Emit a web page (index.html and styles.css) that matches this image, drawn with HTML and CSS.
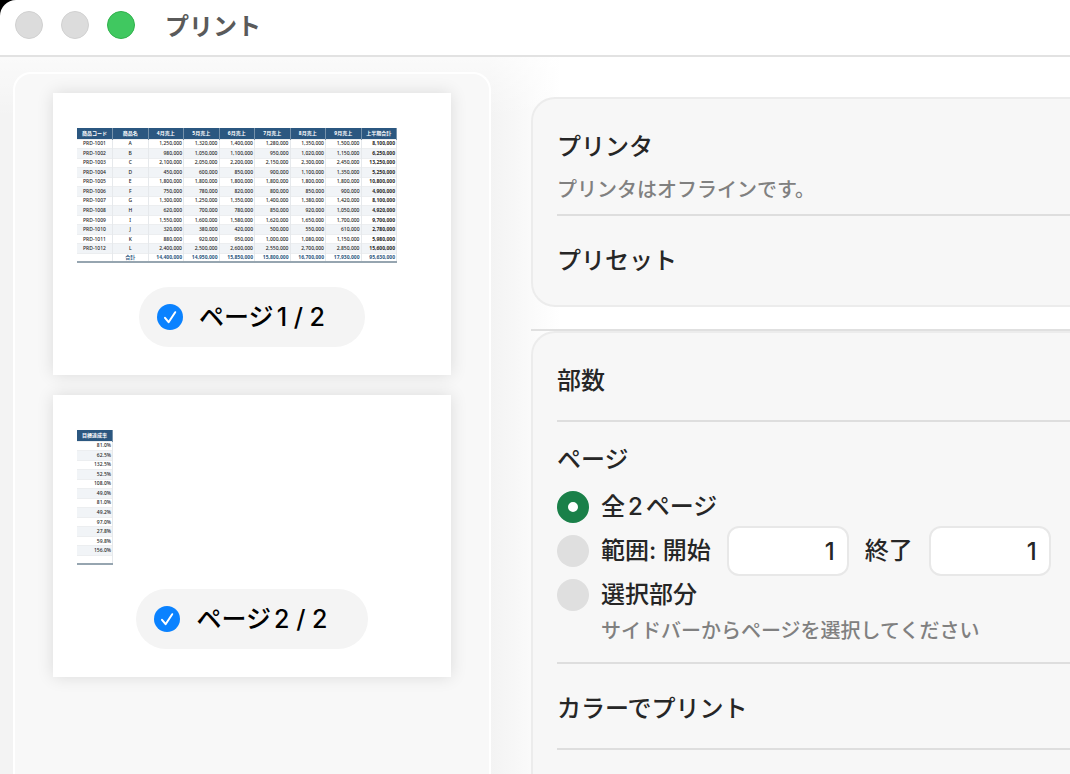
FILE: index.html
```html
<!doctype html>
<html lang="ja">

<head>
    <meta charset="UTF-8">
    <title>プリント</title>
    <link rel="stylesheet" href="styles.css">
</head>

<body>
    <div class="window">
        <header class="titlebar">
            <div class="lights">
                <button type="button" class="light" aria-label="閉じる"></button>
                <button type="button" class="light" aria-label="しまう"></button>
                <button type="button" class="light zoom" aria-label="拡大"></button>
            </div>
            <h1>プリント</h1>
        </header>

        <div class="content">
            <aside class="preview">
                <div class="sheet">
                    <table class="sales">
                        <thead>
                            <tr><th>商品コード</th><th>商品名</th><th>4月売上</th><th>5月売上</th><th>6月売上</th><th>7月売上</th><th>8月売上</th><th>9月売上</th><th>上半期合計</th></tr>
                        </thead>
                        <tbody>
                            <tr><td>PRD-1001</td><td>A</td><td>1,250,000</td><td>1,320,000</td><td>1,400,000</td><td>1,280,000</td><td>1,350,000</td><td>1,500,000</td><td>8,100,000</td></tr>
                            <tr><td>PRD-1002</td><td>B</td><td>980,000</td><td>1,050,000</td><td>1,100,000</td><td>950,000</td><td>1,020,000</td><td>1,150,000</td><td>6,250,000</td></tr>
                            <tr><td>PRD-1003</td><td>C</td><td>2,100,000</td><td>2,050,000</td><td>2,200,000</td><td>2,150,000</td><td>2,300,000</td><td>2,450,000</td><td>13,250,000</td></tr>
                            <tr><td>PRD-1004</td><td>D</td><td>450,000</td><td>600,000</td><td>850,000</td><td>900,000</td><td>1,100,000</td><td>1,350,000</td><td>5,250,000</td></tr>
                            <tr><td>PRD-1005</td><td>E</td><td>1,800,000</td><td>1,800,000</td><td>1,800,000</td><td>1,800,000</td><td>1,800,000</td><td>1,800,000</td><td>10,800,000</td></tr>
                            <tr><td>PRD-1006</td><td>F</td><td>750,000</td><td>780,000</td><td>820,000</td><td>800,000</td><td>850,000</td><td>900,000</td><td>4,900,000</td></tr>
                            <tr><td>PRD-1007</td><td>G</td><td>1,300,000</td><td>1,250,000</td><td>1,350,000</td><td>1,400,000</td><td>1,380,000</td><td>1,420,000</td><td>8,100,000</td></tr>
                            <tr><td>PRD-1008</td><td>H</td><td>620,000</td><td>700,000</td><td>780,000</td><td>850,000</td><td>920,000</td><td>1,050,000</td><td>4,920,000</td></tr>
                            <tr><td>PRD-1009</td><td>I</td><td>1,550,000</td><td>1,600,000</td><td>1,580,000</td><td>1,620,000</td><td>1,650,000</td><td>1,700,000</td><td>9,700,000</td></tr>
                            <tr><td>PRD-1010</td><td>J</td><td>320,000</td><td>380,000</td><td>420,000</td><td>500,000</td><td>550,000</td><td>610,000</td><td>2,780,000</td></tr>
                            <tr><td>PRD-1011</td><td>K</td><td>880,000</td><td>920,000</td><td>950,000</td><td>1,000,000</td><td>1,080,000</td><td>1,150,000</td><td>5,980,000</td></tr>
                            <tr><td>PRD-1012</td><td>L</td><td>2,400,000</td><td>2,500,000</td><td>2,600,000</td><td>2,550,000</td><td>2,700,000</td><td>2,850,000</td><td>15,600,000</td></tr>
                        </tbody>
                        <tfoot>
                            <tr><td></td><td>合計</td><td>14,400,000</td><td>14,950,000</td><td>15,850,000</td><td>15,800,000</td><td>16,700,000</td><td>17,930,000</td><td>95,630,000</td></tr>
                        </tfoot>
                    </table>
                    <label class="badge" for="page1">
                        <input type="checkbox" id="page1" checked>
                        <span>ページ1 / 2</span>
                    </label>
                </div>

                <div class="sheet">
                    <table class="sales rate">
                        <thead>
                            <tr><th>目標達成率</th></tr>
                        </thead>
                        <tbody>
                            <tr><td>81.0%</td></tr>
                            <tr><td>62.5%</td></tr>
                            <tr><td>132.5%</td></tr>
                            <tr><td>52.5%</td></tr>
                            <tr><td>108.0%</td></tr>
                            <tr><td>49.0%</td></tr>
                            <tr><td>81.0%</td></tr>
                            <tr><td>49.2%</td></tr>
                            <tr><td>97.0%</td></tr>
                            <tr><td>27.8%</td></tr>
                            <tr><td>59.8%</td></tr>
                            <tr><td>156.0%</td></tr>
                        </tbody>
                        <tfoot>
                            <tr><td>&nbsp;</td></tr>
                        </tfoot>
                    </table>
                    <label class="badge" for="page2">
                        <input type="checkbox" id="page2" checked>
                        <span>ページ2 / 2</span>
                    </label>
                </div>
            </aside>

            <main class="settings">
                <section class="card">
                    <div class="row">
                        <h2>プリンタ</h2>
                        <p class="hint">プリンタはオフラインです。</p>
                    </div>
                    <div class="row">
                        <h2>プリセット</h2>
                    </div>
                </section>

                <div class="options">
                    <section class="card">
                        <div class="row">
                            <h2>部数</h2>
                        </div>
                        <div class="row pages">
                            <h2>ページ</h2>
                            <div class="choice">
                                <input type="radio" name="range" id="all" checked>
                                <label for="all">全2ページ</label>
                            </div>
                            <div class="choice">
                                <input type="radio" name="range" id="part">
                                <label for="part">範囲: 開始</label>
                                <input type="text" id="from" value="1" inputmode="numeric" aria-label="開始">
                                <label for="to">終了</label>
                                <input type="text" id="to" value="1" inputmode="numeric">
                            </div>
                            <div class="choice">
                                <input type="radio" name="range" id="selection">
                                <label for="selection">選択部分</label>
                            </div>
                            <p class="hint">サイドバーからページを選択してください</p>
                        </div>
                        <div class="row">
                            <h2>カラーでプリント</h2>
                        </div>
                        <div class="row"></div>
                    </section>
                </div>
            </main>
        </div>
    </div>
</body>

</html>
```

FILE: styles.css
```css
* {
    box-sizing: border-box;
}

html {
    background: #000;
}

body {
    margin: 0;
    font-family: Inter, "Noto Sans CJK JP", sans-serif;
    font-size: 24px;
    font-weight: 500;
    line-height: 36px;
    text-autospace: normal;
    color: #262626;
}

h1,
h2,
p {
    margin: 0;
    font-size: inherit;
    font-weight: inherit;
}

.window {
    display: flex;
    flex-direction: column;
    height: 100vh;
    overflow: hidden;
    background: #fff;
    border-top-left-radius: 16px;
}

/* title bar */
.titlebar {
    display: flex;
    align-items: center;
    gap: 30px;
    flex: none;
    height: 57px;
    padding: 0 15px 5px;
    border-bottom: 2px solid #e2e2e2;
}

.titlebar h1 {
    padding-top: 3px;
    font-weight: bold;
    color: #5a5a5a;
}

.lights {
    display: flex;
    gap: 18px;
}

.light {
    width: 28px;
    height: 28px;
    padding: 0;
    border: 1px solid #d0d0d0;
    border-radius: 50%;
    background: #dcdcdc;
}

.light.zoom {
    border-color: #30b14c;
    background: #40c860;
}

.content {
    display: flex;
    gap: 40px;
    flex: 1;
    min-height: 0;
    padding-left: 13px;
    background: linear-gradient(rgba(255, 255, 255, .6), rgba(255, 255, 255, 0) 60px),
        linear-gradient(to right, #f3f3f3 490px, #fff 560px);
}

/* page previews */
.preview {
    display: flex;
    flex-direction: column;
    gap: 20px;
    flex: 0 0 478px;
    margin-top: 15px;
    padding: 19px 38px 0;
    border: 2px solid #fff;
    border-bottom: 0;
    border-radius: 18px 18px 0 0;
    background: #f8f8f8;
}

.sheet {
    display: flex;
    flex-direction: column;
    align-items: center;
    gap: 24px;
    height: 282px;
    padding: 35px 24px 0;
    background: #fff;
    box-shadow: 0 0 16px rgba(0, 0, 0, .12);
}

.sales {
    align-self: flex-start;
    table-layout: fixed;
    width: 320px;
    height: 135px;
    border-collapse: collapse;
    border-bottom: 2px solid #96a5b0;
    font-family: "Noto Sans", "Noto Sans CJK JP", sans-serif;
    font-size: 5px;
    line-height: 7px;
    text-autospace: no-autospace;
    white-space: nowrap;
}

.sales.rate {
    width: 36px;
}

.sales th,
.sales td {
    padding: 0 1px;
    border-right: 1px solid #e6e9ec;
    text-align: right;
}

.sales th {
    height: 11px;
    border-color: #7591aa;
    background: #2b5780;
    color: #fff;
    text-align: center;
}

.sales td {
    border-top: 1px solid #eceef0;
}

.sales tbody tr:nth-child(even) {
    background: #f1f4f7;
}

.sales:not(.rate) td:nth-child(-n+2) {
    text-align: center;
}

.sales tbody td:nth-child(9) {
    font-weight: bold;
}

.sales tfoot {
    color: #2b5780;
    font-weight: bold;
}

.badge {
    display: flex;
    align-items: center;
    gap: 16px;
    height: 60px;
    padding: 0 40px 0 18px;
    border-radius: 30px;
    background: #f4f4f4;
    color: #000;
    font-size: 25px;
}

.badge input {
    appearance: none;
    width: 26px;
    height: 26px;
    margin: 0;
    border-radius: 50%;
    background: #c8c8c8;
}

.badge input:checked {
    background: #0a82ff url("data:image/svg+xml,%3Csvg xmlns='http://www.w3.org/2000/svg' viewBox='0 0 26 26'%3E%3Cpath d='M8 13.8l3.6 4.4 6.6-10' fill='none' stroke='white' stroke-width='2' stroke-linecap='round' stroke-linejoin='round'/%3E%3C/svg%3E");
}

/* settings */
.settings {
    display: flex;
    flex-direction: column;
    gap: 22px;
    flex: 1;
    min-width: 0;
    padding-top: 40px;
}

.card {
    padding: 3px 0 5px 24px;
    border: 2px solid #ececec;
    border-right: 0;
    border-radius: 24px 0 0 24px;
    background: #f7f7f7;
}

.options {
    border-top: 2px solid #e0e0e0;
}

.row {
    padding: 27px 0 21px;
}

.row + .row {
    border-top: 2px solid #dedede;
}

.hint {
    font-size: 20px;
    line-height: 28px;
    color: #808080;
}

.row h2 + .hint {
    margin-top: 11px;
    margin-bottom: -11px;
}

.row.pages {
    padding: 20px 0 17px;
}

.pages h2 {
    margin-bottom: 7px;
}

.choice {
    display: flex;
    align-items: center;
    gap: 16px;
    height: 44px;
    white-space: nowrap;
}

.choice input[type="radio"] {
    appearance: none;
    flex: none;
    width: 32px;
    height: 32px;
    margin: 0 -4px 0 0;
    border-radius: 50%;
    background: #dfdfdf;
}

.choice input[type="radio"]:checked {
    border: 11px solid #1a8049;
    background: #fff;
}

.choice input[type="text"] {
    flex: none;
    width: 122px;
    height: 50px;
    padding: 0 12px;
    border: 2px solid #e8e8e8;
    border-radius: 12px;
    background: #fff;
    color: inherit;
    font: inherit;
    text-align: right;
}

.pages .hint {
    margin-left: 44px;
}
```
